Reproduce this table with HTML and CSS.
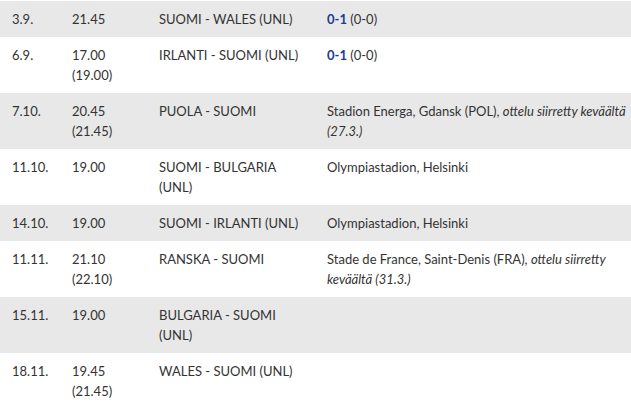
FILE: index.html
```html
<!DOCTYPE html>
<html lang="fi">
<head>
<meta charset="utf-8">
<link rel="stylesheet" href="styles.css">
</head>
<body>
<div class="wrap">
<table class="games">
  <colgroup>
    <col class="c-date"><col class="c-time"><col class="c-match"><col class="c-venue">
  </colgroup>
  <tbody>
    <tr class="alt">
      <td>3.9.</td><td>21.45</td><td>SUOMI - WALES (UNL)</td>
      <td><b class="score">0-1</b> (0-0)</td>
    </tr>
    <tr>
      <td>6.9.</td><td>17.00 (19.00)</td><td>IRLANTI - SUOMI (UNL)</td>
      <td><b class="score">0-1</b> (0-0)</td>
    </tr>
    <tr class="alt">
      <td>7.10.</td><td>20.45 (21.45)</td><td>PUOLA - SUOMI</td>
      <td>Stadion Energa, Gdansk (POL), <i>ottelu siirretty keväältä (27.3.)</i></td>
    </tr>
    <tr>
      <td>11.10.</td><td>19.00</td><td>SUOMI - BULGARIA (UNL)</td>
      <td>Olympiastadion, Helsinki</td>
    </tr>
    <tr class="alt">
      <td>14.10.</td><td>19.00</td><td>SUOMI - IRLANTI (UNL)</td>
      <td>Olympiastadion, Helsinki</td>
    </tr>
    <tr>
      <td>11.11.</td><td>21.10 (22.10)</td><td>RANSKA - SUOMI</td>
      <td>Stade de France, Saint-Denis (FRA), <i>ottelu siirretty keväältä (31.3.)</i></td>
    </tr>
    <tr class="alt">
      <td>15.11.</td><td>19.00</td><td>BULGARIA - SUOMI (UNL)</td>
      <td></td>
    </tr>
    <tr>
      <td>18.11.</td><td>19.45 (21.45)</td><td>WALES - SUOMI (UNL)</td>
      <td></td>
    </tr>
  </tbody>
</table>
</div>
</body>
</html>
```

FILE: styles.css
```css
html, body {
  margin: 0;
  padding: 0;
  background: #fff;
}
.wrap {
  padding-top: 1px;
}
.games {
  width: 631px;
  border-collapse: collapse;
  table-layout: fixed;
  font-family: Lato, "Open Sans", sans-serif;
  font-size: 13px;
  line-height: 20px;
  color: #333;
}
.c-date { width: 72px; }
.c-time { width: 87px; }
.c-match { width: 168px; }
.c-venue { width: auto; }
.games td {
  vertical-align: top;
  padding: 8px 16px 8px 0;
}
.games td:first-child {
  padding-left: 12px;
}
.games td:nth-child(2) {
  padding-right: 24px;
}
.games td:last-child {
  padding-right: 4px;
}
.games tr.alt td {
  background: #e8e8e8;
}
.games td:last-child {
  background-clip: padding-box;
}
.score {
  color: #1b3d8f;
  font-weight: 700;
}
```
